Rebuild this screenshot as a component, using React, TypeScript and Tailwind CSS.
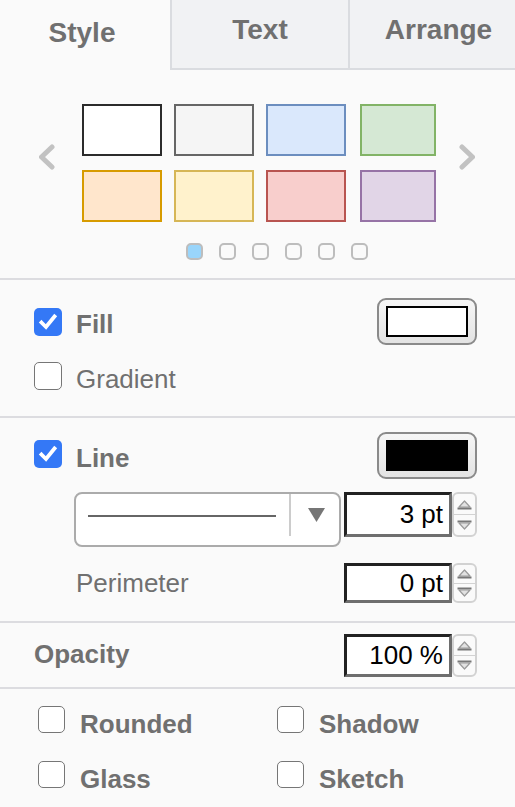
import React from 'react';

const swatches = [
  { bg: 'bg-[#ffffff]', border: 'border-[#2b2b2b]' },
  { bg: 'bg-[#f5f5f5]', border: 'border-[#666666]' },
  { bg: 'bg-[#dae8fc]', border: 'border-[#6c8ebf]' },
  { bg: 'bg-[#d5e8d4]', border: 'border-[#82b366]' },
  { bg: 'bg-[#ffe6cc]', border: 'border-[#d79b00]' },
  { bg: 'bg-[#fff2cc]', border: 'border-[#d6b656]' },
  { bg: 'bg-[#f8cecc]', border: 'border-[#b85450]' },
  { bg: 'bg-[#e1d5e7]', border: 'border-[#9673a6]' },
];

const Checked = () => (
  <div className="w-[28px] h-[28px] rounded-[5px] bg-[#3478f6] flex items-center justify-center shrink-0">
    <svg width="20" height="20" viewBox="0 0 20 20">
      <path d="M3.5 10.5 L8 15 L16.5 4.5" fill="none" stroke="#ffffff" strokeWidth="3.8" strokeLinecap="square" strokeLinejoin="miter" />
    </svg>
  </div>
);

const Unchecked = ({ size = 'w-[28px] h-[28px]' }: { size?: string }) => (
  <div className={`${size} rounded-[5px] border-[1.5px] border-[#767676] bg-white shrink-0`} />
);

const Spinner = ({ h }: { h: string }) => (
  <div className={`w-[25px] ${h} rounded-[6px] border-2 border-[#d2d2d2] flex flex-col shrink-0 bg-[#fafafa]`}>
    <div className="flex-1 flex items-center justify-center border-b border-[#d2d2d2]">
      <svg width="17" height="11" viewBox="0 0 17 11">
        <path d="M3 8 L8.5 2 L14 8 Z" fill="#e2e2e2" stroke="#9a9a9a" strokeWidth="1.2" strokeLinejoin="round" />
        <path d="M1.5 9.5 H15.5" stroke="#777777" strokeWidth="2" />
      </svg>
    </div>
    <div className="flex-1 flex items-center justify-center">
      <svg width="17" height="11" viewBox="0 0 17 11">
        <path d="M1.5 1.5 H15.5" stroke="#777777" strokeWidth="2" />
        <path d="M3 3 L8.5 9 L14 3 Z" fill="#e2e2e2" stroke="#9a9a9a" strokeWidth="1.2" strokeLinejoin="round" />
      </svg>
    </div>
  </div>
);

const NumInput = ({ value, h }: { value: string; h: string }) => (
  <div className="flex items-start">
    <div className={`w-[108px] ${h} bg-white border-[3px] border-t-[#222222] border-l-[#222222] border-b-[#6e6e6e] border-r-[#6e6e6e] flex items-center justify-end pr-[6px] text-[26px] text-black`}>
      {value}
    </div>
    <Spinner h={h} />
  </div>
);

const ColorButton = ({ inner }: { inner: string }) => (
  <div className="w-[100px] h-[47px] rounded-[9px] border-2 border-[#8a8a8a] bg-gradient-to-b from-[#f6f6f6] to-[#e3e3e3] flex px-[7px] py-[6px]">
    <div className={`flex-1 ${inner}`} />
  </div>
);

const Chevron = ({ right }: { right?: boolean }) => (
  <svg width="19" height="28" viewBox="0 0 19 28" className="blur-[0.4px]">
    <path
      d={right ? 'M4 4 L14.5 14 L4 24' : 'M15 4 L4.5 14 L15 24'}
      fill="none"
      stroke="#c2c2c2"
      strokeWidth="5"
      strokeLinecap="round"
      strokeLinejoin="round"
    />
  </svg>
);

export default function App() {
  return (
    <div className="w-[515px] h-[807px] bg-[#fafafa] font-['Liberation_Sans',Arial,sans-serif] text-[#707070] overflow-hidden">
      {/* Tabs */}
      <div className="flex h-[70px] text-[28px] font-bold">
        <div className="w-[170px] flex items-center justify-center pb-[4px] pr-[6px]">Style</div>
        <div className="w-[178px] flex items-center justify-center pb-[8px] bg-[#f1f2f4] border-l-2 border-b-2 border-[#dadce0]">Text</div>
        <div className="flex-1 flex items-center justify-center pb-[8px] pl-[12px] bg-[#f1f2f4] border-l-2 border-b-2 border-[#dadce0]">Arrange</div>
      </div>

      {/* Style swatches */}
      <div className="h-[210px] border-b-2 border-[#dcdce0] pt-[34px]">
        <div className="flex items-start">
          <div className="w-[82px] pl-[37px] mt-[39px]">
            <Chevron />
          </div>
          <div className="grid grid-cols-[80px_80px_80px_78px] gap-x-[12px] gap-y-[14px]">
            {swatches.map((s, i) => (
              <div key={i} className={`h-[52px] border-2 ${s.bg} ${s.border} ${i % 4 === 3 ? 'ml-[2px]' : ''}`} />
            ))}
          </div>
          <div className="pl-[22px] mt-[39px]">
            <Chevron right />
          </div>
        </div>
        <div className="flex gap-[16px] pl-[186px] mt-[21px]">
          {[0, 1, 2, 3, 4, 5].map((i) => (
            <div
              key={i}
              className={`w-[17px] h-[17px] rounded-[5px] border-2 border-[#bdbdbd] ${i === 0 ? 'bg-[#99d5fb]' : 'bg-[#fafafa]'}`}
            />
          ))}
        </div>
      </div>

      {/* Fill */}
      <div className="h-[138px] border-b-2 border-[#dcdce0] pt-[18px] pl-[34px] pr-[38px]">
        <div className="flex items-center justify-between">
          <div className="flex items-center gap-[14px] h-[28px]">
            <Checked />
            <span className="text-[26px] font-bold mt-[6px]">Fill</span>
          </div>
          <ColorButton inner="bg-white border-[2.5px] border-black" />
        </div>
        <div className="flex items-center gap-[14px] mt-[17px] h-[28px]">
          <Unchecked />
          <span className="text-[26px] mt-[7px]">Gradient</span>
        </div>
      </div>

      {/* Line */}
      <div className="h-[205px] border-b-2 border-[#dcdce0] pt-[14px] pl-[34px] pr-[38px]">
        <div className="flex items-center justify-between">
          <div className="flex items-center gap-[14px] h-[28px] mt-[-3px]">
            <Checked />
            <span className="text-[26px] font-bold mt-[8px]">Line</span>
          </div>
          <ColorButton inner="bg-black" />
        </div>
        <div className="flex items-start gap-[3px] mt-[13px] ml-[40px]">
          <div className="w-[267px] h-[55px] rounded-[8px] border-2 border-[#ababab] bg-white flex items-start pl-[12px]">
            <div className="w-[188px] h-[2px] bg-[#666666] mt-[21px]" />
            <div className="w-[2px] h-[42px] bg-[#cccccc] ml-[13px]" />
            <svg width="19" height="16" viewBox="0 0 19 16" className="ml-[16px] mt-[13px]">
              <path d="M1 1 H18 L9.5 15 Z" fill="#767676" />
            </svg>
          </div>
          <NumInput value="3 pt" h="h-[45px]" />
        </div>
        <div className="flex items-center mt-[16px] pl-[42px]">
          <span className="flex-1 text-[26px]">Perimeter</span>
          <NumInput value="0 pt" h="h-[40px]" />
        </div>
      </div>

      {/* Opacity */}
      <div className="h-[66px] border-b-2 border-[#dcdce0] flex items-center justify-between pl-[34px] pr-[38px]">
        <span className="text-[26px] font-bold mt-[-2px]">Opacity</span>
        <NumInput value="100 %" h="h-[43px]" />
      </div>

      {/* Options */}
      <div className="pt-[17px] pl-[38px] grid grid-cols-[239px_1fr] gap-y-[28px] text-[26px] font-bold">
        {['Rounded', 'Shadow', 'Glass', 'Sketch'].map((label) => (
          <div key={label} className="flex items-center gap-[15px] h-[27px]">
            <Unchecked size="w-[27px] h-[27px]" />
            <span className="mt-[10px]">{label}</span>
          </div>
        ))}
      </div>
    </div>
  );
}
